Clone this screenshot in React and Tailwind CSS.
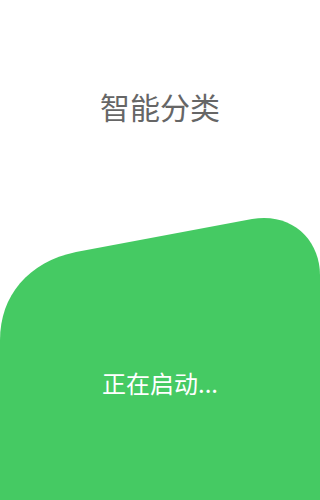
import React from 'react';

const font = { fontFamily: '"Noto Sans CJK SC", "Noto Sans", sans-serif' };

const SplashScreen = () => {
  return (
    <div className="relative w-[320px] h-[500px] bg-white overflow-hidden" style={font}>
      {/* Green wave background */}
      <svg className="absolute inset-0" width="320" height="500" viewBox="0 0 320 500">
        <path
          d="M0 500 L0 340 C0 296 28 262 76 252 L252 219 C292 212 320 240 320 275 L320 500 Z"
          fill="#45ca63"
        />
      </svg>

      <div className="relative flex flex-col items-center h-full">
        <h1 className="mt-[86px] text-[30px] leading-[40px] text-[#666666]">智能分类</h1>
        <div className="flex-1" />
        <p className="mb-[102px] text-[24px] leading-[30px] text-white">正在启动...</p>
      </div>
    </div>
  );
};

export default function App() {
  return <SplashScreen />;
}
